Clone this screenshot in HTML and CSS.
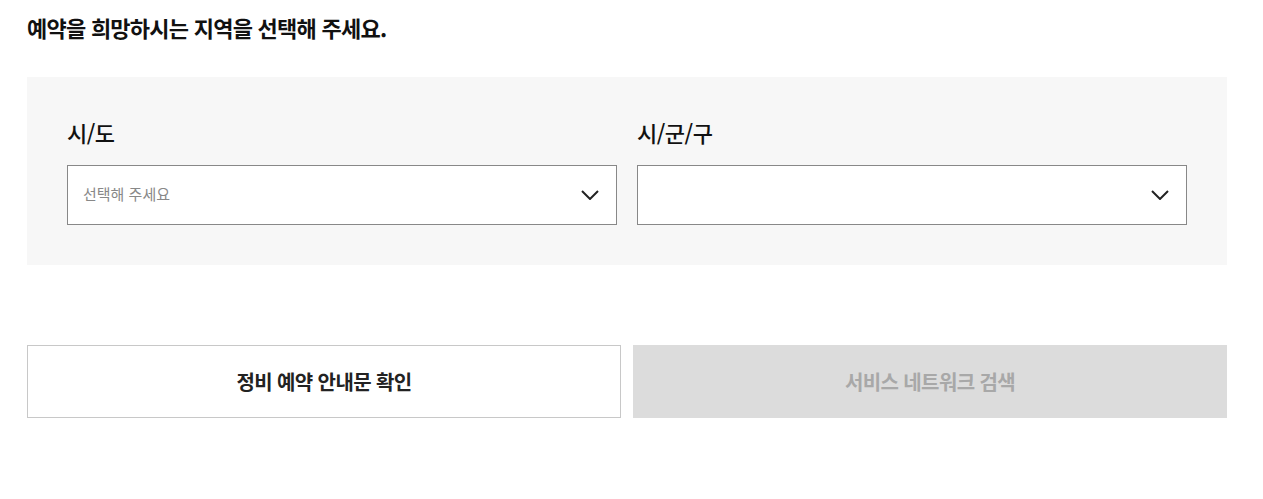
FILE: index.html
```html
<!DOCTYPE html>
<html lang="ko">
<head>
<meta charset="utf-8">
<link rel="stylesheet" href="styles.css">
</head>
<body>
<div class="page">
  <h2 class="title">예약을 희망하시는 지역을 선택해 주세요.</h2>
  <div class="panel">
    <div class="field">
      <div class="label">시/도</div>
      <div class="select">
        <span class="placeholder">선택해 주세요</span>
        <svg class="chev" width="18" height="10" viewBox="0 0 18 10"><path d="M1 1 L9 9 L17 1" fill="none" stroke="#222" stroke-width="2"/></svg>
      </div>
    </div>
    <div class="field">
      <div class="label">시/군/구</div>
      <div class="select">
        <span class="placeholder"></span>
        <svg class="chev" width="18" height="10" viewBox="0 0 18 10"><path d="M1 1 L9 9 L17 1" fill="none" stroke="#222" stroke-width="2"/></svg>
      </div>
    </div>
  </div>
  <div class="buttons">
    <button class="btn btn-line">정비 예약 안내문 확인</button>
    <button class="btn btn-off">서비스 네트워크 검색</button>
  </div>
</div>
</body>
</html>
```
FILE: styles.css
```css
* { box-sizing: border-box; }
body {
  margin: 0;
  background: #fff;
  font-family: "Noto Sans CJK KR", "Noto Sans", sans-serif;
  color: #222;
}
.page {
  width: 1200px;
  margin-left: 27px;
  padding-top: 12px;
}
.title {
  margin: 0;
  font-size: 22px;
  line-height: 30px;
  font-weight: 700;
  letter-spacing: -0.75px;
  color: #111;
}
.panel {
  margin-top: 35px;
  background: #f7f7f7;
  padding: 40px;
  display: grid;
  grid-template-columns: 550px 550px;
  column-gap: 20px;
}
.label {
  font-size: 22px;
  line-height: 30px;
  font-weight: 500;
  letter-spacing: -0.5px;
  color: #111;
  margin-bottom: 18px;
}
.select {
  height: 60px;
  border: 1px solid #888;
  background: #fff;
  display: flex;
  align-items: center;
  justify-content: space-between;
  padding: 0 17px 0 15px;
}
.placeholder {
  font-size: 15px;
  line-height: 20px;
  color: #888;
  letter-spacing: 0;
  margin-top: -3px;
}
.chev { display: block; }
.buttons {
  margin-top: 80px;
  display: grid;
  grid-template-columns: 1fr 1fr;
  column-gap: 12px;
}
.btn {
  height: 73px;
  font-family: inherit;
  font-size: 20px;
  font-weight: 700;
  letter-spacing: -0.6px;
  border: 1px solid #c8c8c8;
  background: #fff;
  color: #222;
  padding: 0;
}
.btn-off {
  border-color: #dcdcdc;
  background: #dcdcdc;
  color: #a8a8a8;
}
```
